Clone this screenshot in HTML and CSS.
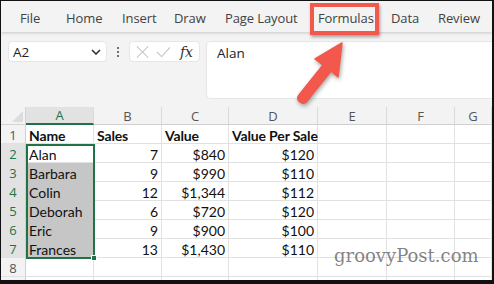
FILE: index.html
```html
<!DOCTYPE html>
<html lang="en">
<head>
    <meta charset="UTF-8">
    <title>Formulas tab</title>
    <link rel="stylesheet" href="styles.css">
</head>
<body>
    <div class="frame">
        <nav class="ribbon">
            <span class="tab t-file">File</span>
            <span class="tab t-home">Home</span>
            <span class="tab t-insert">Insert</span>
            <span class="tab t-draw">Draw</span>
            <span class="tab t-layout">Page Layout</span>
            <span class="tab t-formulas">Formulas</span>
            <span class="tab t-data">Data</span>
            <span class="tab">Review</span>
        </nav>

        <div class="formula-bar">
            <div class="name-box">
                <span>A2</span>
                <svg width="10" height="6" viewBox="0 0 10 6"><path d="M1 1l4 4 4-4" fill="none" stroke="#333" stroke-width="1.6"/></svg>
            </div>
            <div class="dots"><i></i><i></i><i></i></div>
            <div class="fx-box">
                <svg width="14" height="14" viewBox="0 0 14 14"><path d="M1 1l12 12M13 1L1 13" stroke="#c8c8c8" stroke-width="1.2"/></svg>
                <svg width="16" height="14" viewBox="0 0 16 14"><path d="M1 7l5 5L15 2" fill="none" stroke="#c8c8c8" stroke-width="1.2"/></svg>
                <span class="fx">fx</span>
            </div>
            <div class="formula-input">Alan</div>
        </div>

        <div class="sheet">
            <div class="corner"><span></span></div>
            <div class="col-head sel">A</div>
            <div class="col-head">B</div>
            <div class="col-head">C</div>
            <div class="col-head">D</div>
            <div class="col-head">E</div>
            <div class="col-head">F</div>
            <div class="col-head">G</div>

            <div class="row-head">1</div>
            <div class="cell b">Name</div>
            <div class="cell b">Sales</div>
            <div class="cell b">Value</div>
            <div class="cell b">Value Per Sale</div>
            <div class="cell"></div><div class="cell"></div><div class="cell"></div>

            <div class="row-head sel">2</div>
            <div class="cell a">Alan</div>
            <div class="cell n">7</div>
            <div class="cell n">$840</div>
            <div class="cell n">$120</div>
            <div class="cell"></div><div class="cell"></div><div class="cell"></div>

            <div class="row-head sel">3</div>
            <div class="cell s">Barbara</div>
            <div class="cell n">9</div>
            <div class="cell n">$990</div>
            <div class="cell n">$110</div>
            <div class="cell"></div><div class="cell"></div><div class="cell"></div>

            <div class="row-head sel">4</div>
            <div class="cell s">Colin</div>
            <div class="cell n">12</div>
            <div class="cell n">$1,344</div>
            <div class="cell n">$112</div>
            <div class="cell"></div><div class="cell"></div><div class="cell"></div>

            <div class="row-head sel">5</div>
            <div class="cell s">Deborah</div>
            <div class="cell n">6</div>
            <div class="cell n">$720</div>
            <div class="cell n">$120</div>
            <div class="cell"></div><div class="cell"></div><div class="cell"></div>

            <div class="row-head sel">6</div>
            <div class="cell s">Eric</div>
            <div class="cell n">9</div>
            <div class="cell n">$900</div>
            <div class="cell n">$100</div>
            <div class="cell"></div><div class="cell"></div><div class="cell"></div>

            <div class="row-head sel">7</div>
            <div class="cell s">Frances</div>
            <div class="cell n">13</div>
            <div class="cell n">$1,430</div>
            <div class="cell n">$110</div>
            <div class="cell"></div><div class="cell"></div><div class="cell"></div>

            <div class="row-head">8</div>
            <div class="cell"></div><div class="cell"></div><div class="cell"></div><div class="cell"></div>
            <div class="cell"></div><div class="cell"></div><div class="cell"></div>

            <div class="row-head"></div>
            <div class="cell"></div><div class="cell"></div><div class="cell"></div><div class="cell"></div>
            <div class="cell"></div><div class="cell"></div><div class="cell"></div>

            <!-- selection outline A2:A7 -->
            <div class="selection"><span class="handle"></span></div>
        </div>

        <!-- callout over the ribbon -->
        <div class="callout-box"></div>
        <svg class="arrow" width="60" height="70" viewBox="0 0 60 70">
            <path d="M49 4 L45 38 L38 32 L14 62 Q11 66 7 63 Q3 60 6 56 L30 26 L22 20 Z" fill="#f2584c" stroke="#f2584c" stroke-width="1.5" stroke-linejoin="round"/>
        </svg>
        <div class="watermark">groovyPost.com</div>
    </div>
</body>
</html>
```

FILE: styles.css
```css
* {
    box-sizing: border-box;
}

body {
    margin: 0;
    background: #000;
    font-family: "Open Sans", "Noto Sans", sans-serif;
    color: #222;
}

.frame {
    position: relative;
    width: 494px;
    height: 284px;
    border-style: solid;
    border-color: #111;
    border-width: 1px 2px 4px 1px;
    background: #f3f3f3;
    overflow: hidden;
}

/* Ribbon tabs */
.ribbon {
    display: flex;
    align-items: center;
    height: 31px;
    padding: 2px 0 0 19px;
    background: #f3f3f3;
    box-shadow: 0 1px 3px rgba(0, 0, 0, 0.18);
    position: relative;
    z-index: 1;
}

.tab {
    font-size: 13px;
    color: #424242;
    white-space: nowrap;
    letter-spacing: -0.1px;
}

.t-file { width: 46px; }
.t-home { width: 56px; }
.t-insert { width: 52px; }
.t-draw { width: 51px; }
.t-layout { width: 93px; }
.t-formulas { width: 73px; }
.t-data { width: 47px; }

/* Formula bar */
.formula-bar {
    display: flex;
    align-items: flex-start;
    padding: 9px 0 0 7px;
    height: 75px;
}

.name-box {
    width: 99px;
    height: 21px;
    background: #fff;
    border-radius: 4px;
    border: 1px solid #e6e6e6;
    display: flex;
    align-items: center;
    justify-content: space-between;
    padding: 0 5px 0 4px;
    font-size: 13.5px;
    color: #222;
}

.dots {
    width: 22px;
    height: 21px;
    display: flex;
    flex-direction: column;
    align-items: center;
    justify-content: center;
    gap: 2px;
}

.dots i {
    width: 2px;
    height: 2px;
    background: #444;
    border-radius: 1px;
}

.fx-box {
    width: 71px;
    height: 21px;
    background: #fff;
    border-radius: 4px;
    border: 1px solid #e6e6e6;
    display: flex;
    align-items: center;
    gap: 7px;
    padding: 0 6px;
}

.fx {
    font-family: "DejaVu Serif", "Liberation Serif", serif;
    font-style: italic;
    font-size: 14px;
    color: #333;
    margin-left: 2px;
}

.formula-input {
    flex: 1;
    height: 58px;
    margin-left: 6px;
    background: #fff;
    border: 1px solid #e6e6e6;
    border-right: none;
    border-radius: 5px 0 0 5px;
    padding: 2px 10px;
    font-size: 13.5px;
    color: #222;
}

/* Sheet grid */
.sheet {
    position: relative;
    display: grid;
    grid-template-columns: 25px 68px 68px 67px 89px 69px 68px 1fr;
    grid-template-rows: 18px repeat(9, 19px);
    background: #fff;
    font-family: Lato, "Liberation Sans", sans-serif;
    font-size: 14px;
}

.corner {
    background: #f3f3f3;
    border-right: 1px solid #d4d4d4;
    border-bottom: 1px solid #d4d4d4;
    position: relative;
}

.corner span {
    position: absolute;
    right: 2px;
    bottom: 2px;
    width: 0;
    height: 0;
    border-left: 11px solid transparent;
    border-bottom: 11px solid #dcdcdc;
}

.col-head {
    background: #f3f3f3;
    border-right: 1px solid #dadada;
    border-bottom: 1px solid #cfcfcf;
    display: flex;
    align-items: center;
    justify-content: center;
    font-family: "Open Sans", "Noto Sans", sans-serif;
    font-size: 13px;
    color: #555;
}

.col-head.sel {
    background: #e2e2e2;
    color: #217346;
    border-bottom: 2px solid #217346;
}

.row-head {
    background: #f3f3f3;
    border-right: 1px solid #cfcfcf;
    border-bottom: 1px solid #e1e1e1;
    display: flex;
    align-items: center;
    justify-content: center;
    font-family: "Open Sans", "Noto Sans", sans-serif;
    font-size: 13px;
    color: #555;
    padding-top: 1px;
}

.row-head.sel {
    color: #217346;
    background: #e2e2e2;
}

.cell {
    border-right: 1px solid #e1e1e1;
    border-bottom: 1px solid #e1e1e1;
    padding: 2px 3px 0;
    display: flex;
    align-items: center;
    color: #111;
    white-space: nowrap;
}

.cell.b {
    font-weight: bold;
    letter-spacing: -0.15px;
}

.cell.n {
    justify-content: flex-end;
}

.cell.s {
    background: #c6c6c6;
    border-bottom-color: #c6c6c6;
}

.selection {
    position: absolute;
    left: 25px;
    top: 37px;
    width: 69px;
    height: 115px;
    border: 2px solid #217346;
    pointer-events: none;
}

.handle {
    position: absolute;
    right: -4px;
    bottom: -4px;
    width: 6px;
    height: 6px;
    background: #217346;
    border: 1px solid #fff;
}

/* Overlays */
.callout-box {
    position: absolute;
    left: 309px;
    top: 2px;
    width: 69px;
    height: 32px;
    border: 4px solid #f2584c;
    box-shadow: 1px 2px 3px rgba(0, 0, 0, 0.35);
    z-index: 3;
}

.arrow {
    position: absolute;
    left: 292px;
    top: 38px;
    z-index: 3;
    filter: drop-shadow(1px 2px 2px rgba(0, 0, 0, 0.35));
}

.watermark {
    position: absolute;
    left: 333px;
    top: 244px;
    font-family: "DejaVu Serif", "Liberation Serif", serif;
    font-size: 18px;
    color: rgba(90, 90, 90, 0.75);
    z-index: 2;
}
```
